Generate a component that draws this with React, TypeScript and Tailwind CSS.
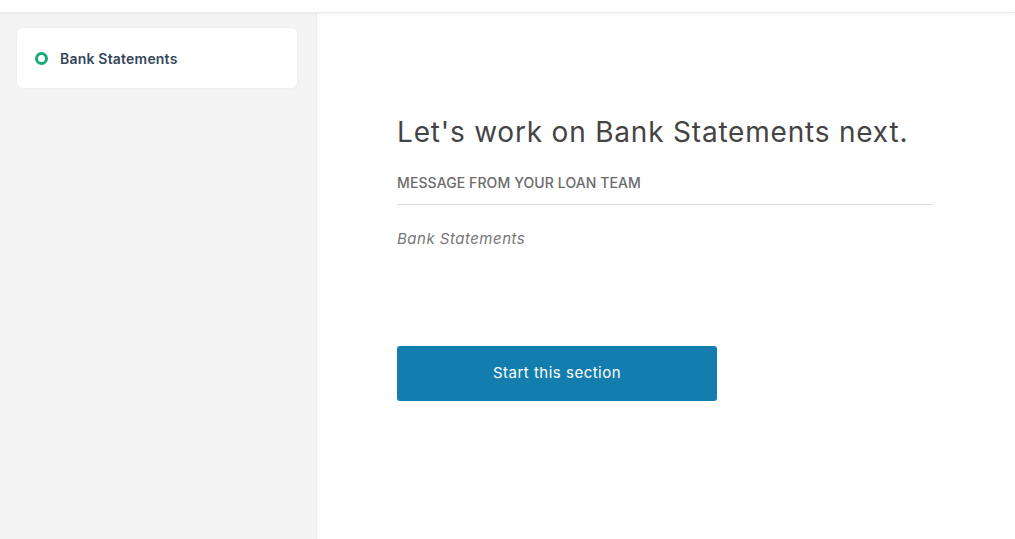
export default function App() {
    return (
        <div className="h-[539px] w-full flex flex-col bg-white font-['Inter',sans-serif] overflow-hidden">
            <div className="h-[13px] shrink-0 bg-white border-b border-[#ebebeb] shadow-[0_1px_3px_rgba(0,0,0,0.06)] relative z-10" />
            <div className="flex flex-1">
                <aside className="w-[317px] shrink-0 bg-[#f4f4f4] border-r border-[#ededed] pt-[15px] pl-[17px] pr-[19px]">
                    <div className="h-[60px] bg-white rounded-md shadow-[0_0_2px_rgba(0,0,0,0.08)] flex items-center pl-[18px] gap-[12px]">
                        <span className="size-[13px] rounded-full border-[3px] border-[#1aa97a]" />
                        <span className="text-[14px] font-semibold text-[#34475a] tracking-[0.2px]">Bank Statements</span>
                    </div>
                </aside>
                <main className="flex-1 pl-[80px] pt-[101px]">
                    <div className="w-[536px]">
                        <h1 className="text-[28px] leading-[36px] text-[#444] tracking-[0.8px]">
                            Let's work on Bank Statements next.
                        </h1>
                        <div className="mt-[22px] pb-[11px] border-b border-[#dcdcdc] text-[14px] font-medium text-[#6b6b6b] uppercase tracking-[0.1px]">
                            Message from your loan team
                        </div>
                        <p className="mt-[23px] text-[15px] italic text-[#777] tracking-[0.5px]">Bank Statements</p>
                        <button
                            type="button"
                            className="mt-[95px] w-[320px] h-[55px] bg-[#137dad] rounded-[3px] text-white text-[15px] tracking-[0.5px]"
                        >
                            Start this section
                        </button>
                    </div>
                </main>
            </div>
        </div>
    );
}
